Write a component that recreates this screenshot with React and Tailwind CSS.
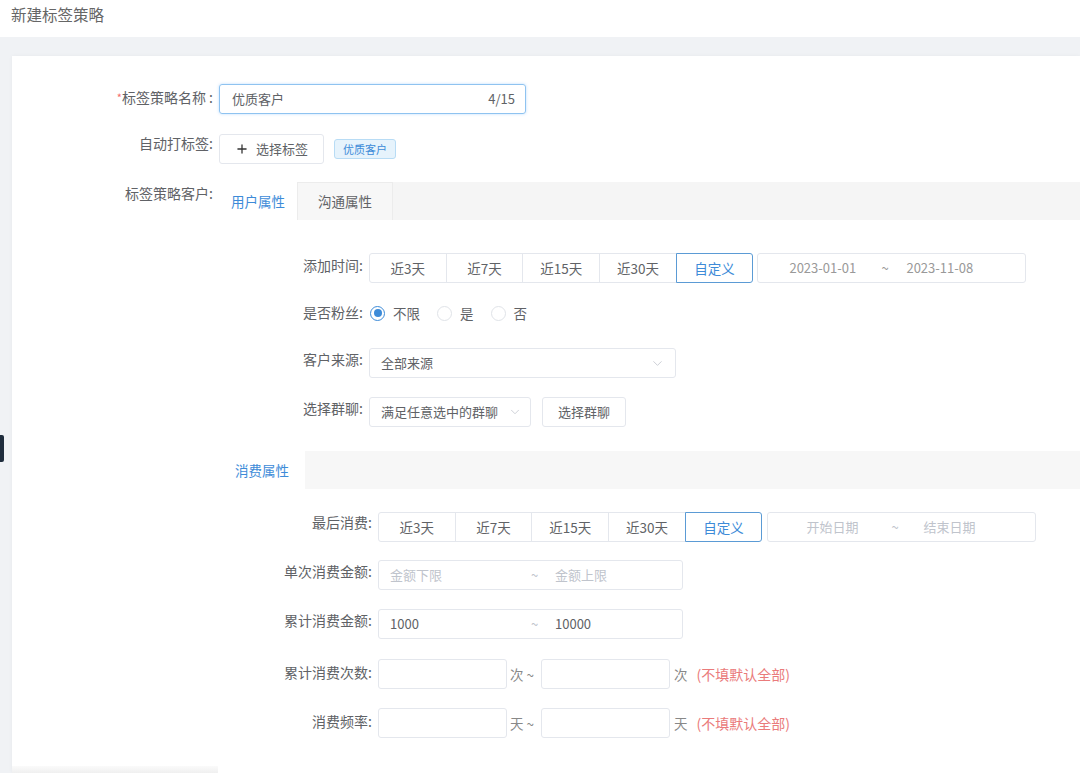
import React from "react";
import { ChevronDown, Plus } from "lucide-react";

const FONT = { fontFamily: '"Microsoft YaHei", "Noto Sans CJK SC", "Noto Sans", sans-serif' };

function Label({ w, children, star, lh = "leading-[24px]" }) {
  return (
    <div className={`${w} ${lh} shrink-0 text-right text-[14px] text-[#606266] pr-[6px] whitespace-nowrap`}>
      {star && <span className="text-[#f56c6c] text-[11px] align-top">*</span>}
      {children}
    </div>
  );
}

function BtnGroup({ selected = 4 }) {
  const items = ["近3天", "近7天", "近15天", "近30天", "自定义"];
  return (
    <div className="flex h-[30px]">
      {items.map((t, i) => (
        <div
          key={t}
          className={`w-[77.7px] h-[30px] flex items-center justify-center text-[13.5px] border ${
            i > 0 ? "-ml-px" : ""
          } ${i === 0 ? "rounded-l-[3px]" : ""} ${i === items.length - 1 ? "rounded-r-[3px]" : ""} ${
            i === selected
              ? "border-[#5b9bd5] text-[#3d8bd8] relative z-10 bg-white"
              : "border-[#e4e7ed] text-[#606266] bg-white"
          }`}
        >
          {t}
        </div>
      ))}
    </div>
  );
}

function Radio({ checked, label }) {
  return (
    <div className="flex items-center mr-[17px]">
      <span
        className={`w-[15px] h-[15px] rounded-full border flex items-center justify-center ${
          checked ? "border-[#3d8bd8]" : "border-[#e0e3e8]"
        }`}
      >
        {checked && <span className="w-[8px] h-[8px] rounded-full bg-[#3d8bd8]" />}
      </span>
      <span className="ml-[8px] text-[13.5px] text-[#606266]">{label}</span>
    </div>
  );
}

function Box({ className = "", children }) {
  return (
    <div className={`h-[30px] border border-[#e4e7ed] rounded-[3px] bg-white flex items-center text-[13px] ${className}`}>
      {children}
    </div>
  );
}

export default function App() {
  return (
    <div className="w-[1080px] h-[773px] overflow-hidden bg-white relative" style={FONT}>
      {/* header */}
      <div className="h-[37px] bg-white pl-[11px] pt-[3px] text-[15.5px] text-[#666]">新建标签策略</div>
      {/* gray area */}
      <div className="bg-[#f0f2f5] pt-[19px] pl-[12px] h-[736px]">
        <div className="bg-white h-full pt-[28px] shadow-[0_0_4px_rgba(0,0,0,0.04)]">
          {/* row 1 */}
          <div className="flex items-start">
            <Label w="w-[207px]" star lh="leading-[26px]">标签策略名称 :</Label>
            <div className="w-[307px] h-[30px] border border-[#8fc3f0] rounded-[3px] shadow-[0_0_3px_rgba(64,158,255,0.35)] flex items-center justify-between pl-[12px] pr-[10px] text-[13px] text-[#606266]">
              <span>优质客户</span>
              <span>4/15</span>
            </div>
          </div>
          {/* row 2 */}
          <div className="flex items-start mt-[20px]">
            <Label w="w-[207px]" lh="leading-[18px]">自动打标签:</Label>
            <div className="flex items-center">
              <div className="w-[105px] h-[30px] border border-[#e4e7ed] rounded-[3px] flex items-center pl-[15px] text-[13px] text-[#606266]">
                <Plus size={14} strokeWidth={2.2} color="#333" />
                <span className="ml-[7px]">选择标签</span>
              </div>
              <div className="ml-[10px] h-[20px] px-[8px] bg-[#e6f3fc] border border-[#b8dcf5] rounded-[3px] text-[11px] text-[#3d8bd8] flex items-center">
                优质客户
              </div>
            </div>
          </div>
          {/* row 3 */}
          <div className="flex items-start mt-[18px]">
            <Label w="w-[207px]" lh="leading-[22px]">标签策略客户:</Label>
            <div className="flex-1">
              {/* tabs */}
              <div className="h-[38px] bg-[#f5f5f5] flex">
                <div className="w-[78px] h-[38px] bg-white flex items-center justify-center text-[13.5px] text-[#3d8bd8]">
                  用户属性
                </div>
                <div className="w-[96px] h-[38px] bg-[#f7f7f7] border border-[#ececec] border-b-0 flex items-center justify-center text-[13.5px] text-[#606266]">
                  沟通属性
                </div>
              </div>

              {/* user attrs */}
              <div className="flex items-start mt-[33px]">
                <Label w="w-[150px]">添加时间:</Label>
                <BtnGroup />
                <Box className="ml-[4px] w-[269px] pl-[31px] text-[#999]">
                  <span className="w-[92px]">2023-01-01</span>
                  <span className="w-[25px]">~</span>
                  <span>2023-11-08</span>
                </Box>
              </div>
              <div className="flex items-start mt-[15px]">
                <Label w="w-[150px]" lh="leading-[28px]">是否粉丝:</Label>
                <div className="h-[30px] flex items-center pl-[1px]">
                  <Radio checked label="不限" />
                  <Radio label="是" />
                  <Radio label="否" />
                </div>
              </div>
              <div className="flex items-start mt-[20px]">
                <Label w="w-[150px]" lh="leading-[22px]">客户来源:</Label>
                <Box className="w-[307px] pl-[11px] pr-[10px] justify-between text-[#606266]">
                  <span>全部来源</span>
                  <ChevronDown size={15} strokeWidth={1.3} color="#c0c4cc" />
                </Box>
              </div>
              <div className="flex items-start mt-[19px]">
                <Label w="w-[150px]" lh="leading-[22px]">选择群聊:</Label>
                <Box className="w-[162px] pl-[11px] pr-[8px] justify-between text-[#606266]">
                  <span>满足任意选中的群聊</span>
                  <ChevronDown size={14} strokeWidth={1.3} color="#c0c4cc" />
                </Box>
                <Box className="ml-[11px] w-[84px] justify-center text-[#606266]">选择群聊</Box>
              </div>

              {/* consumption tab */}
              <div className="h-[38px] bg-[#f7f7f7] flex mt-[24px]">
                <div className="w-[86px] h-[38px] bg-white flex items-center justify-center text-[13.5px] text-[#3d8bd8]">
                  消费属性
                </div>
              </div>

              <div className="flex items-start mt-[23px]">
                <Label w="w-[159px]" lh="leading-[20px]">最后消费:</Label>
                <BtnGroup />
                <Box className="ml-[5px] w-[269px] pl-[38px] text-[#c0c4cc]">
                  <span className="w-[85px]">开始日期</span>
                  <span className="w-[32px]">~</span>
                  <span>结束日期</span>
                </Box>
              </div>
              <div className="flex items-start mt-[18px]">
                <Label w="w-[159px]" lh="leading-[22px]">单次消费金额:</Label>
                <Box className="w-[305px] pl-[11px] text-[#c0c4cc]">
                  <span className="w-[141px]">金额下限</span>
                  <span className="w-[24px]">~</span>
                  <span>金额上限</span>
                </Box>
              </div>
              <div className="flex items-start mt-[19px]">
                <Label w="w-[159px]" lh="leading-[22px]">累计消费金额:</Label>
                <Box className="w-[305px] pl-[11px] text-[#606266]">
                  <span className="w-[141px]">1000</span>
                  <span className="w-[24px] text-[#c0c4cc]">~</span>
                  <span>10000</span>
                </Box>
              </div>
              <div className="flex items-start mt-[20px]">
                <Label w="w-[159px]" lh="leading-[26px]">累计消费次数:</Label>
                <div className="flex items-center text-[13.5px] text-[#888]">
                  <Box className="w-[129px]" />
                  <span className="w-[34px] pl-[3px] whitespace-nowrap">次 ~</span>
                  <Box className="w-[129px]" />
                  <span className="ml-[4px]">次</span>
                  <span className="ml-[9px] text-[14px] text-[#ea7b7b]">(不填默认全部)</span>
                </div>
              </div>
              <div className="flex items-start mt-[19px]">
                <Label w="w-[159px]" lh="leading-[26px]">消费频率:</Label>
                <div className="flex items-center text-[13.5px] text-[#888]">
                  <Box className="w-[129px]" />
                  <span className="w-[34px] pl-[3px] whitespace-nowrap">天 ~</span>
                  <Box className="w-[129px]" />
                  <span className="ml-[4px]">天</span>
                  <span className="ml-[9px] text-[14px] text-[#ea7b7b]">(不填默认全部)</span>
                </div>
              </div>
            </div>
          </div>
        </div>
      </div>
      {/* floating fragment at left edge */}
      <div className="absolute left-0 top-[435px] w-[4px] h-[27px] bg-[#1f2d3d] rounded-r-[2px]" />
      {/* bottom edge shadow fragment */}
      <div className="absolute left-[12px] bottom-0 w-[206px] h-[7px] bg-gradient-to-b from-[#fafafa] to-[#f0f0f0]" />
    </div>
  );
}
